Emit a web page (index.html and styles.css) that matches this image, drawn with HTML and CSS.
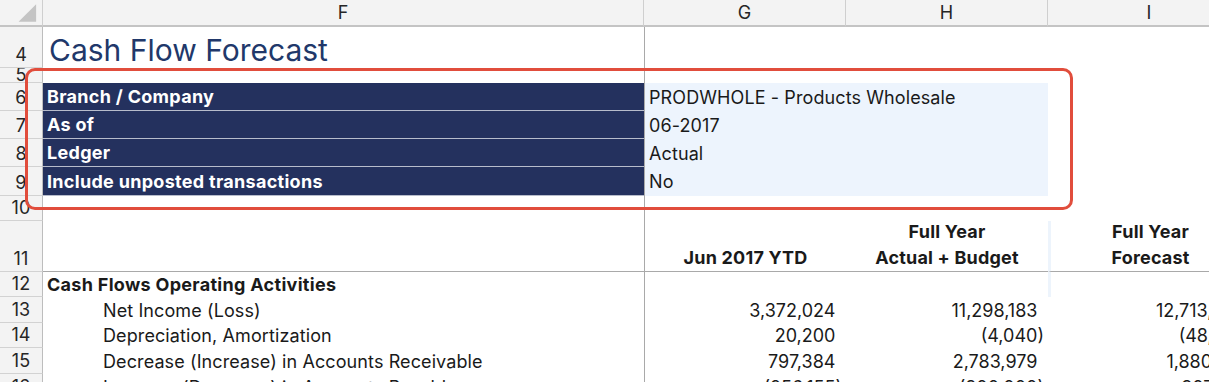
FILE: index.html
```html
<!DOCTYPE html>
<html>
<head>
<meta charset="utf-8">
<link rel="stylesheet" href="styles.css">
</head>
<body>
<div class="sheet">
  <div class="grid">
    <!-- column header row -->
    <div class="corner"><svg width="43" height="27" viewBox="0 0 43 27"><polygon points="37,4 37,22 19,22" fill="#c4c4c4"/></svg></div>
    <div class="colhead">F</div>
    <div class="colhead">G</div>
    <div class="colhead">H</div>
    <div class="colhead last">I</div>

    <!-- row 4 -->
    <div class="rh">4</div>
    <div class="c f title">Cash Flow Forecast</div>
    <div class="c g"></div><div class="c"></div><div class="c"></div>

    <!-- row 5 -->
    <div class="rh tiny">5</div>
    <div class="c f"></div><div class="c g"></div><div class="c"></div><div class="c"></div>

    <!-- rows 6-9 -->
    <div class="rh">6</div>
    <div class="c f lbl">Branch / Company</div>
    <div class="c g val">PRODWHOLE - Products Wholesale</div><div class="c"></div>

    <div class="rh">7</div>
    <div class="c f lbl">As of</div>
    <div class="c g val">06-2017</div><div class="c"></div>

    <div class="rh">8</div>
    <div class="c f lbl">Ledger</div>
    <div class="c g val">Actual</div><div class="c"></div>

    <div class="rh">9</div>
    <div class="c f lbl">Include unposted transactions</div>
    <div class="c g val">No</div><div class="c"></div>

    <!-- row 10 -->
    <div class="rh">10</div>
    <div class="c f"></div><div class="c g"></div><div class="c"></div><div class="c"></div>

    <!-- row 11 -->
    <div class="rh">11</div>
    <div class="c f hl"></div>
    <div class="c g hl colt">Jun 2017 YTD</div>
    <div class="c hl colt">Full Year<br>Actual + Budget</div>
    <div class="c hl colt iband icol">Full Year<br>Forecast</div>

    <!-- row 12 -->
    <div class="rh">12</div>
    <div class="c f sect">Cash Flows Operating Activities</div>
    <div class="c g"></div><div class="c"></div><div class="c iband"></div>

    <!-- row 13 -->
    <div class="rh">13</div>
    <div class="c f item">Net Income (Loss)</div>
    <div class="c g num"><span class="pos">3,372,024</span></div>
    <div class="c num"><span class="pos">11,298,183</span></div>
    <div class="c num"><span class="pos">12,713,488</span></div>

    <!-- row 14 -->
    <div class="rh">14</div>
    <div class="c f item">Depreciation, Amortization</div>
    <div class="c g num"><span class="pos">20,200</span></div>
    <div class="c num">(4,040)</div>
    <div class="c num">(48,240)</div>

    <!-- row 15 -->
    <div class="rh">15</div>
    <div class="c f item">Decrease (Increase) in Accounts Receivable</div>
    <div class="c g num"><span class="pos">797,384</span></div>
    <div class="c num"><span class="pos">2,783,979</span></div>
    <div class="c num"><span class="pos">1,880,412</span></div>

    <!-- row 16 -->
    <div class="rh">16</div>
    <div class="c f item">Increase (Decrease) in Accounts Payable</div>
    <div class="c g num">(256,155)</div>
    <div class="c num">(800,000)</div>
    <div class="c num"><span class="pos">307,410</span></div>
  </div>

  <div class="highlight"></div>
</div>
</body>
</html>
```

FILE: styles.css
```css
html, body {
  margin: 0;
  padding: 0;
  background: #ffffff;
  overflow: hidden;
}

.sheet {
  position: relative;
  width: 1209px;
  height: 382px;
  overflow: hidden;
  font-family: "Inter", "Liberation Sans", sans-serif;
  font-size: 18px;
  letter-spacing: 0.1px;
  color: #1a1a1a;
}

.grid {
  display: grid;
  grid-template-columns: 43px 601px 202px 202px 209px;
  grid-template-rows: 27px 41px 15px 28px 28px 28px 29px 25px 51px 25px 26px 25px 26px 26px;
}

.corner {
  background: #f3f3f3;
  border-right: 1px solid #cfcfcf;
  border-bottom: 2px solid #c4c4c4;
  box-sizing: border-box;
  display: flex;
}

.colhead {
  background: #f3f3f3;
  border-right: 1px solid #cfcfcf;
  border-bottom: 2px solid #c4c4c4;
  box-sizing: border-box;
  display: flex;
  align-items: center;
  justify-content: center;
  font-size: 18px;
  color: #262626;
}

.colhead.last {
  border-right: none;
  padding-right: 7px;
}

.rh {
  background: #f3f3f3;
  border-right: 1px solid #bdbdbd;
  border-bottom: 1px solid #d2d2d2;
  box-sizing: border-box;
  display: flex;
  align-items: flex-end;
  justify-content: center;
  padding-bottom: 3px;
  overflow: hidden;
  font-size: 18px;
  line-height: 18px;
  color: #262626;
}

.rh.tiny {
  line-height: 14px;
  align-items: flex-start;
  padding-bottom: 0;
}

.c {
  box-sizing: border-box;
  display: flex;
  align-items: center;
  white-space: nowrap;
  overflow: hidden;
  min-width: 0;
}

.c.g {
  border-left: 1px solid #a9a9a9;
}

.title {
  font-size: 30px;
  color: #21386a;
  padding-left: 6px;
  padding-top: 5px;
  letter-spacing: 0;
}

.lbl {
  background: #24315e;
  color: #ffffff;
  font-weight: 700;
  letter-spacing: 0.3px;
  padding-left: 4px;
  border-bottom: 1px solid #b7bccb;
}

.val {
  grid-column: span 2;
  background: #edf4fd;
  padding-left: 4px;
}

.hl {
  border-bottom: 1px solid #a9a9a9;
}

.colt {
  flex-direction: column;
  justify-content: flex-end;
  align-items: center;
  text-align: center;
  font-weight: 700;
  letter-spacing: 0.2px;
  line-height: 26px;
  padding-bottom: 0;
}

.colt.icol {
  padding-right: 7px;
}

.iband {
  border-left: 3px solid #edf4fc;
}

.sect {
  font-weight: 700;
  letter-spacing: 0.3px;
  padding-left: 4px;
}

.item {
  padding-left: 60px;
}

.num {
  justify-content: flex-end;
  padding-right: 4px;
  letter-spacing: 0;
}

.pos::after {
  content: ")";
  visibility: hidden;
}

.highlight {
  position: absolute;
  left: 25px;
  top: 68px;
  width: 1048px;
  height: 142px;
  box-sizing: border-box;
  border: 3px solid #e14d3c;
  border-radius: 10px;
  pointer-events: none;
}
```
